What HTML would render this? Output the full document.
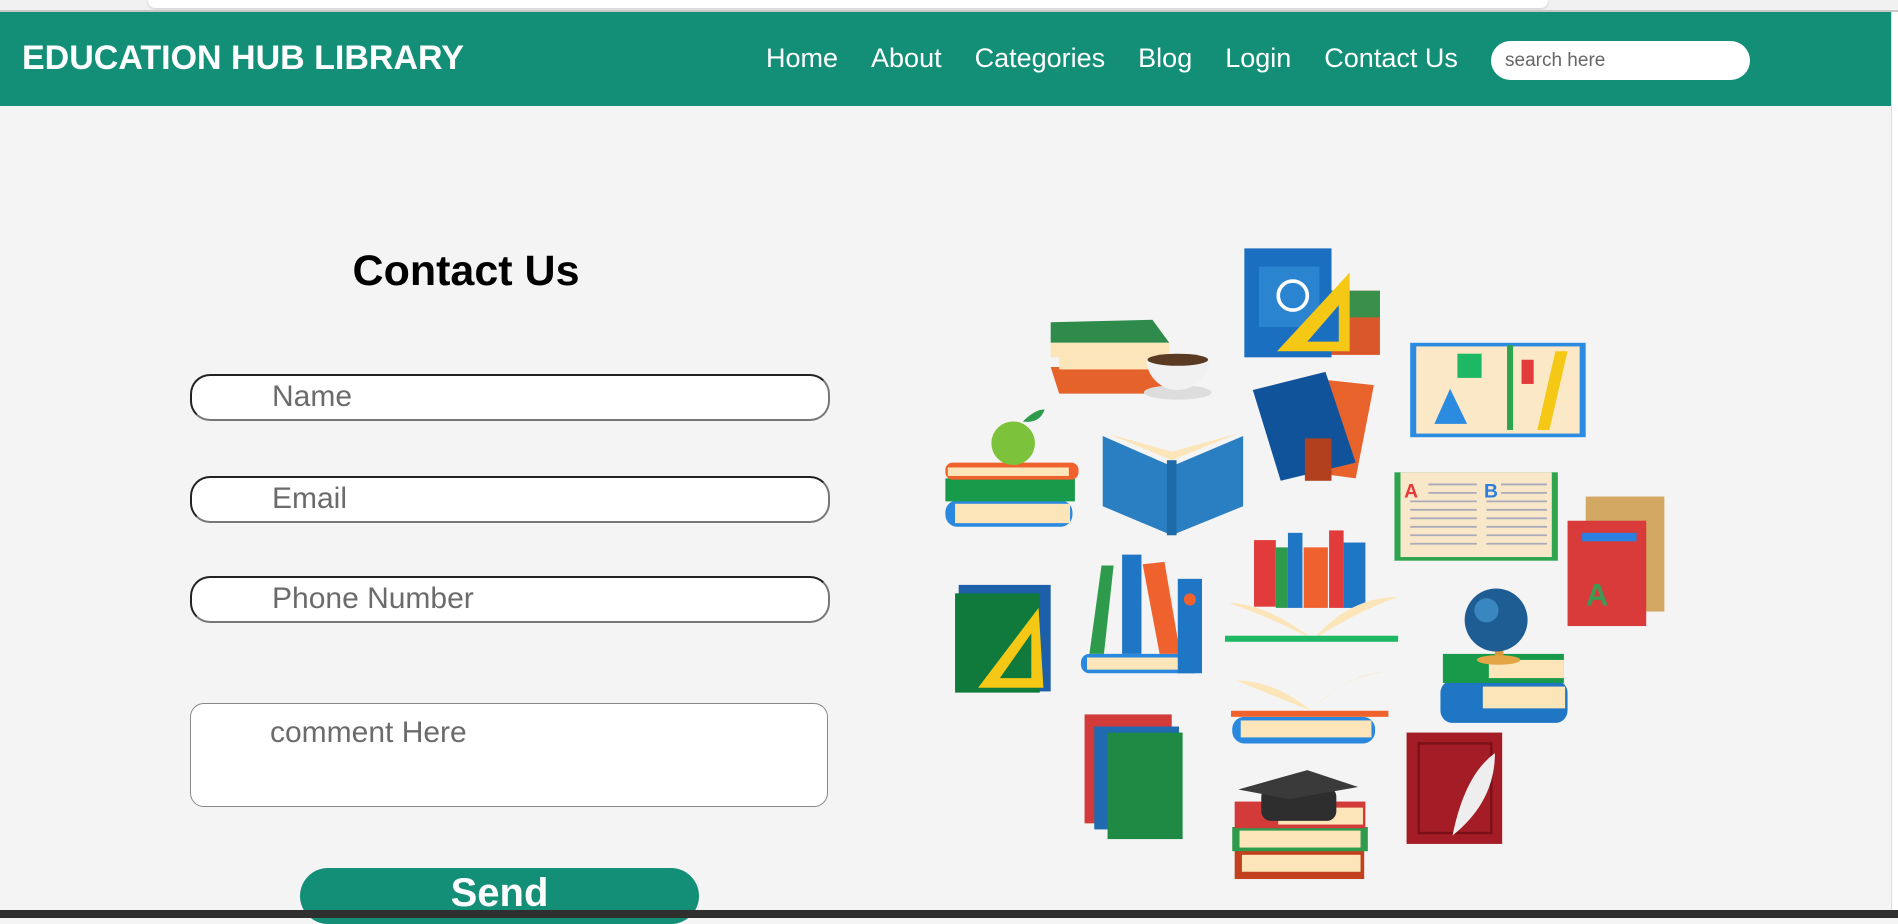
<!DOCTYPE html>
<html><head><meta charset="utf-8"><style>
*{margin:0;padding:0;box-sizing:border-box}
body{width:1898px;height:918px;overflow:hidden;background:#f4f4f4;font-family:"Liberation Sans",Arial,sans-serif;position:relative}
.top{position:absolute;left:0;top:0;width:1898px;height:12px;background:#f1f1f1;border-bottom:2px solid #c8c8c8}
.top div{position:absolute;left:148px;top:-6px;width:1400px;height:14px;background:#fff;border-radius:8px;box-shadow:0 1px 2px #ccc}
nav{position:absolute;left:0;top:12px;width:1891px;height:94px;background:#128f76}
.logo{position:absolute;left:22px;top:27px;color:#fff;font-weight:bold;font-size:34px;letter-spacing:0}
.links{position:absolute;left:766px;top:31px;color:#fff;font-size:27px;white-space:nowrap}
.links span{margin-right:33px}
.search{position:absolute;left:1491px;top:29px;width:259px;height:39px;background:#fff;border-radius:20px;color:#666;font-size:19px;padding:9px 14px}
.sb{position:absolute;left:1891px;top:12px;width:7px;height:898px;background:#fff;border-left:1px solid #ddd}
h1{position:absolute;left:186px;width:560px;top:247px;text-align:center;font-size:43px;font-weight:bold;color:#000}
.in{position:absolute;left:190px;width:640px;height:47px;background:#fff;border:2px solid #222;border-right-color:#777;border-bottom-color:#777;border-radius:20px;color:#6b6b6b;font-size:30px;padding:4px 0 0 80px}
.ta{position:absolute;left:190px;top:703px;width:638px;height:104px;background:#fff;border:1px solid #888;border-radius:14px;color:#6b6b6b;font-size:30px;padding:12px 0 0 79px}
.btn{position:absolute;left:300px;top:868px;width:399px;height:56px;background:#128f76;border-radius:28px;color:#fff;font-weight:bold;font-size:40px;text-align:center;padding-top:3px}
.bot{position:absolute;left:0;top:910px;width:1898px;height:8px;background:#2f2f2f}
svg{position:absolute;left:0;top:0}
</style></head><body>
<div class="top"><div></div></div>
<nav><div class="logo">EDUCATION HUB LIBRARY</div>
<div class="links"><span>Home</span><span>About</span><span>Categories</span><span>Blog</span><span>Login</span><span>Contact Us</span></div>
<div class="search">search here</div></nav>
<div class="sb"></div>
<h1>Contact Us</h1>
<div class="in" style="top:374px">Name</div>
<div class="in" style="top:476px">Email</div>
<div class="in" style="top:576px">Phone Number</div>
<div class="ta">comment Here</div>
<div class="btn">Send</div>
<svg width="1898" height="918" viewBox="0 0 1568 758">
<rect x="1100" y="240" width="40" height="53" fill="#d9572b"/><rect x="1100" y="240" width="40" height="22" fill="#3a8f4a"/>
<rect x="1028" y="205" width="72" height="90" fill="#1a6fc0"/><rect x="1040" y="220" width="50" height="50" fill="#2a84d0"/>
<circle cx="1068" cy="244" r="12" fill="none" stroke="#fff" stroke-width="3"/>
<polygon points="1055,290 1115,225 1115,290" fill="#f4c815"/><polygon points="1080,282 1106,252 1106,282" fill="#1a6fc0"/>
<polygon points="868,303 960,303 965,325 875,325" fill="#e5622a"/><rect x="875" y="295" width="90" height="10" fill="#fce5b8"/>
<polygon points="868,266 952,264 966,283 868,283" fill="#2e8b4b"/><rect x="868" y="283" width="98" height="12" fill="#fce5b8"/>
<ellipse cx="973" cy="324" rx="28" ry="6" fill="#ddd"/><path d="M947 296 h52 a26 26 0 0 1 -52 0z" fill="#f1f1f1"/><ellipse cx="973" cy="297" rx="25" ry="5" fill="#5a3a22"/>
<rect x="1165" y="283" width="145" height="78" fill="#2a8be0"/><rect x="1170" y="286" width="135" height="72" fill="#fbe8c6"/>
<rect x="1204" y="292" width="20" height="20" fill="#1cb863"/><polygon points="1198,321 1185,350 1212,350" fill="#2a8be0"/>
<rect x="1245" y="285" width="5" height="70" fill="#2ea44f"/><polygon points="1285,290 1295,290 1280,355 1270,355" fill="#f4c815"/><rect x="1257" y="297" width="10" height="20" fill="#e23b3b"/>
<polygon points="1080,312 1135,318 1120,395 1068,388" fill="#e8632c"/>
<polygon points="1035,322 1095,307 1120,382 1058,397" fill="#11539b"/>
<rect x="1078" y="362" width="22" height="35" fill="#b2401e"/>
<rect x="781" y="413" width="105" height="22" rx="10" fill="#2a88de"/><rect x="789" y="416" width="95" height="16" fill="#fce5b8"/>
<rect x="781" y="395" width="107" height="19" fill="#189a4b"/><rect x="781" y="382" width="110" height="14" rx="6" fill="#f0622d"/><rect x="783" y="386" width="100" height="7" fill="#fce5b8"/>
<circle cx="837" cy="366" r="18" fill="#7cc23a"/><path d="M845 348 q10-10 18-10 q-4 12-18 10z" fill="#2e9a4b"/>
<polygon points="911,360 968,385 1027,360 1027,418 968,442 911,418" fill="#2a7fc3"/><polygon points="915,358 968,380 1022,358 968,373" fill="#fce5b8"/><rect x="964" y="380" width="8" height="62" fill="#1f6aa8"/>
<rect x="1152" y="390" width="135" height="73" fill="#2ea44f"/><rect x="1157" y="390" width="125" height="70" fill="#f8e7c9"/>
<g stroke="#aab" stroke-width="1.5"><path d="M1180 400h40M1180 407h40M1165 414h55M1165 421h55M1165 428h55M1165 435h55M1165 442h55M1165 449h55M1240 400h38M1240 407h38M1228 414h50M1228 421h50M1228 428h50M1228 435h50M1228 442h50M1228 449h50"/></g>
<text x="1160" y="411" font-family="Liberation Sans" font-weight="bold" font-size="16" fill="#e73a3a">A</text><text x="1226" y="411" font-family="Liberation Sans" font-weight="bold" font-size="16" fill="#2a7fe0">B</text>
<rect x="1310" y="410" width="65" height="95" fill="#d3a862"/><rect x="1295" y="430" width="65" height="87" fill="#d93a3a"/><rect x="1307" y="440" width="45" height="7" fill="#2a7fe0"/>
<text x="1310" y="500" font-family="Liberation Sans" font-weight="bold" font-size="26" fill="#3d9a55">A</text>
<rect x="1036" y="446" width="18" height="55" fill="#e23b3b"/><rect x="1054" y="452" width="10" height="50" fill="#2e9a4b"/><rect x="1064" y="440" width="12" height="62" fill="#1f76c4"/><rect x="1077" y="452" width="20" height="50" fill="#f0622d"/><rect x="1098" y="438" width="12" height="64" fill="#e23b3b"/><rect x="1110" y="448" width="18" height="54" fill="#1f76c4"/>
<path d="M1085 528 q-40-30 -70 -30 q30 10 70 30 q40-25 70-35 q-40 0 -70 35z" fill="#fce5b8"/><rect x="1012" y="525" width="143" height="5" fill="#1cb863"/>
<rect x="792" y="483" width="76" height="88" fill="#1d5fa8"/><rect x="789" y="490" width="70" height="82" fill="#0f7a3c"/><polygon points="808,568 858,502 862,568" fill="#f4c815"/><polygon points="826,560 852,523 852,560" fill="#0f7a3c"/>
<rect x="893" y="540" width="100" height="16" rx="7" fill="#2a88de"/><rect x="898" y="543" width="92" height="10" fill="#fce5b8"/>
<polygon points="910,467 920,467 912,540 900,540" fill="#2e9a4b"/><rect x="927" y="458" width="16" height="82" fill="#1f76c4"/>
<polygon points="944,466 962,464 975,540 958,540" fill="#f0622d"/><rect x="973" y="478" width="20" height="78" fill="#1f76c4"/><circle cx="983" cy="495" r="5" fill="#f0622d"/>
<rect x="1190" y="562" width="105" height="35" rx="10" fill="#1f76c4"/><rect x="1225" y="567" width="68" height="18" fill="#fce5b8"/>
<rect x="1192" y="540" width="100" height="24" fill="#189a4b"/><rect x="1230" y="545" width="62" height="15" fill="#fce5b8"/>
<rect x="1235" y="528" width="7" height="16" fill="#d99a3a"/><ellipse cx="1238" cy="545" rx="18" ry="4" fill="#e4a645"/>
<circle cx="1236" cy="512" r="26" fill="#1e5d94"/><circle cx="1228" cy="504" r="10" fill="#3a86c0"/>
<rect x="1018" y="592" width="118" height="22" rx="10" fill="#2a88de"/><rect x="1025" y="595" width="108" height="14" fill="#fce5b8"/><rect x="1017" y="587" width="130" height="5" fill="#f0622d"/>
<path d="M1083 587 q-30-25 -62 -25 q25 10 62 25 q30-30 60-32 q-35 5 -60 32z" fill="#fce5b8"/>
<rect x="896" y="590" width="72" height="90" fill="#d33a3a"/><rect x="904" y="600" width="70" height="85" fill="#1f6ab0"/><rect x="915" y="605" width="62" height="88" fill="#1e8a44"/>
<rect x="1020" y="702" width="107" height="24" fill="#c2401e"/><rect x="1026" y="706" width="98" height="14" fill="#fce5b8"/>
<rect x="1018" y="683" width="112" height="20" fill="#2e9a4b"/><rect x="1024" y="686" width="100" height="14" fill="#fce5b8"/>
<rect x="1020" y="662" width="108" height="22" fill="#d33a3a"/><rect x="1056" y="667" width="70" height="14" fill="#fce5b8"/>
<rect x="1042" y="650" width="62" height="28" rx="8" fill="#2e2e2e"/><polygon points="1023,652 1080,636 1122,650 1065,660" fill="#3a3a3a"/>
<rect x="1162" y="605" width="79" height="92" fill="#a41c25"/><rect x="1172" y="614" width="60" height="74" fill="none" stroke="#7a1018" stroke-width="2"/>
<path d="M1200 690 q10-50 35-68 q0 40 -35 68z" fill="#eee"/>
</svg>
<div class="bot"></div>
</body></html>
